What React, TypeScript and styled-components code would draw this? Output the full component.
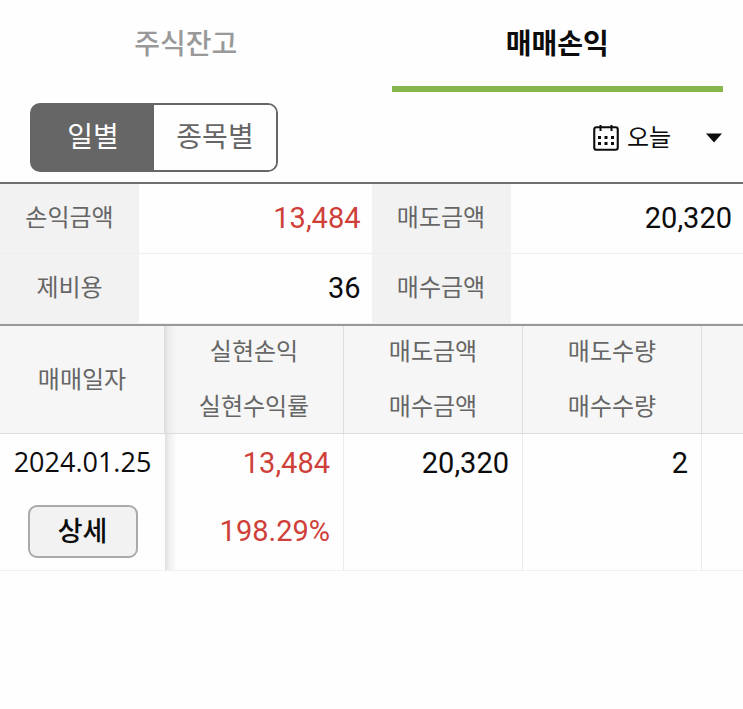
import React, { useState } from "react";
import styled, { createGlobalStyle } from "styled-components";

const GlobalStyle = createGlobalStyle`
  *, *::before, *::after { box-sizing: border-box; }
  body {
    margin: 0;
    background: #fefefe;
    color: #0c0c0c;
    font-family: "Noto Sans CJK KR", sans-serif;
    font-size: 24px;
  }
  button, select { font-family: inherit; margin: 0; }
`;

const Page = styled.main`
  overflow-x: hidden;
`;

const Tabs = styled.nav`
  display: grid;
  grid-template-columns: 1fr 1fr;
`;

const Tab = styled.button<{ $active: boolean }>`
  height: 92px;
  margin: 0 20px;
  padding: 0 0 2px;
  border: 0;
  border-bottom: 6px solid ${(p) => (p.$active ? "#86b64c" : "transparent")};
  background: none;
  color: ${(p) => (p.$active ? "#0c0c0c" : "#999")};
  font-size: 28px;
  font-weight: ${(p) => (p.$active ? 700 : 500)};
`;

const Toolbar = styled.div`
  display: flex;
  align-items: center;
  justify-content: space-between;
  padding: 11px 20px 10px 30px;
`;

const Segments = styled.div`
  display: flex;
  width: 248px;
  height: 69px;
  border: 2px solid #666;
  border-radius: 10px;
  background: linear-gradient(to right, #666 50%, #fefefe 50%) border-box;
  overflow: hidden;
`;

const Segment = styled.button<{ $active: boolean }>`
  flex: 1;
  padding: 0 0 6px;
  border: 0;
  background: ${(p) => (p.$active ? "#666" : "#fefefe")};
  color: ${(p) => (p.$active ? "#fefefe" : "#666")};
  font-size: 28px;
`;

const Period = styled.label`
  display: grid;
  grid-template-columns: 26px 96px;
  align-items: center;
  gap: 8px;
`;

const PeriodSelect = styled.select`
  grid-area: 1 / 2;
  appearance: none;
  padding: 0 0 4px;
  border: 0;
  background: none;
  color: #0c0c0c;
  font-size: 24px;
`;

const Arrow = styled.svg`
  grid-area: 1 / 2;
  justify-self: end;
  pointer-events: none;
`;

const Summary = styled.table`
  width: 100%;
  table-layout: fixed;
  border-collapse: separate;
  border-spacing: 0;
  border-top: 2px solid #707070;
  border-bottom: 2px solid #999;
`;

const SummaryLabel = styled.th`
  width: 139px;
  height: 70px;
  padding: 0 0 6px;
  background: #f2f2f2;
  border-bottom: 1px solid #efefef;
  color: #666;
  font-weight: 400;
`;

const SummaryValue = styled.td<{ $gain?: boolean }>`
  height: 70px;
  padding: 0 11px 2px 0;
  border-bottom: 1px solid #efefef;
  color: ${(p) => (p.$gain ? "#ce4039" : "#0c0c0c")};
  font-family: Roboto, sans-serif;
  font-size: 29px;
  text-align: right;
`;

const Trades = styled.table`
  width: 100%;
  min-width: 743px;
  table-layout: fixed;
  border-collapse: separate;
  border-spacing: 0;
`;

const Column = styled.col<{ $width?: number }>`
  width: ${(p) => (p.$width ? `${p.$width}px` : "auto")};
`;

const edgeShadow = "linear-gradient(to right, #e0e0e0, #eee 4px, transparent 12px)";

const Head = styled.th<{ $shadow?: boolean; $open?: boolean }>`
  height: 108px;
  padding: 0 0 4px;
  background: ${(p) => (p.$shadow ? `${edgeShadow}, #f6f6f6` : "#f6f6f6")};
  border-right: ${(p) => (p.$open ? "0" : "1px solid #dedede")};
  border-bottom: 1px solid #dcdcdc;
  color: #666;
  font-weight: 400;
`;

const HeadLine = styled.span`
  display: block;
  line-height: 48px;

  & + & { margin-top: 7px; }
`;

const Cell = styled.td<{ $shadow?: boolean; $gain?: boolean; $open?: boolean }>`
  height: 137px;
  padding: ${(p) => (p.$open ? "0" : "0 13px 0 0")};
  background: ${(p) => (p.$shadow ? edgeShadow : "none")};
  border-right: ${(p) => (p.$open ? "0" : "1px solid #ececec")};
  border-bottom: 1px solid #f0f0f0;
  color: ${(p) => (p.$gain ? "#ce4039" : "#0c0c0c")};
  font-family: Roboto, sans-serif;
  font-size: 29px;
  text-align: right;
  vertical-align: top;
`;

const CellLine = styled.span`
  display: block;
  height: 68px;
  line-height: 58px;
`;

const DateCell = styled(Cell)`
  text-align: center;
`;

const TradeDate = styled.time`
  display: block;
  height: 71px;
  font-family: "Open Sans", sans-serif;
  font-size: 27px;
  line-height: 56px;
`;

const DetailButton = styled.button`
  display: block;
  width: 110px;
  height: 53px;
  margin: 0 auto;
  padding: 0 0 3px;
  border: 2px solid #aaa;
  border-radius: 9px;
  background: #f2f2f2;
  color: #0c0c0c;
  font-family: "Noto Sans CJK KR", sans-serif;
  font-size: 27px;
  font-weight: 500;
  line-height: 44px;
`;

const CalendarIcon = () => (
  <svg width="26" height="28" viewBox="0 0 26 28" aria-hidden="true">
    <rect x="1.25" y="3.25" width="23.5" height="22.5" rx="2" fill="none" stroke="#0c0c0c" strokeWidth="2.1" />
    <path d="M7.5 1v6M18.5 1v6" stroke="#0c0c0c" strokeWidth="2" />
    <path
      d="M5 12h3v3H5zM11.500 12h3v3h-3zM18 12h3v3h-3zM5 18h3v3H5zM11.500 18h3v3h-3zM18 18h3v3h-3z"
      fill="#0c0c0c"
    />
  </svg>
);

const headings = [
  ["실현손익", "실현수익률"],
  ["매도금액", "매수금액"],
  ["매도수량", "매수수량"],
];

export default function App() {
  const [tab, setTab] = useState("매매손익");
  const [view, setView] = useState("일별");

  return (
    <Page>
      <GlobalStyle />
      <Tabs>
        {["주식잔고", "매매손익"].map((name) => (
          <Tab key={name} $active={tab === name} aria-pressed={tab === name} onClick={() => setTab(name)}>
            {name}
          </Tab>
        ))}
      </Tabs>
      <Toolbar>
        <Segments>
          {["일별", "종목별"].map((name) => (
            <Segment key={name} $active={view === name} aria-pressed={view === name} onClick={() => setView(name)}>
              {name}
            </Segment>
          ))}
        </Segments>
        <Period>
          <CalendarIcon />
          <PeriodSelect aria-label="오늘">
            <option>오늘</option>
          </PeriodSelect>
          <Arrow width="18" height="10" viewBox="0 0 18 10" aria-hidden="true">
            <path d="M1 .5h16L9 9.500z" fill="#0c0c0c" />
          </Arrow>
        </Period>
      </Toolbar>
      <Summary>
        <tbody>
          <tr>
            <SummaryLabel scope="row">손익금액</SummaryLabel>
            <SummaryValue $gain>13,484</SummaryValue>
            <SummaryLabel scope="row">매도금액</SummaryLabel>
            <SummaryValue>20,320</SummaryValue>
          </tr>
          <tr>
            <SummaryLabel scope="row">제비용</SummaryLabel>
            <SummaryValue>36</SummaryValue>
            <SummaryLabel scope="row">매수금액</SummaryLabel>
            <SummaryValue />
          </tr>
        </tbody>
      </Summary>
      <Trades>
        <colgroup>
          <Column $width={165} />
          <Column $width={179} />
          <Column $width={179} />
          <Column $width={179} />
          <Column />
        </colgroup>
        <thead>
          <tr>
            <Head scope="col">매매일자</Head>
            {headings.map(([top, bottom], index) => (
              <Head key={top} scope="col" $shadow={index === 0}>
                <HeadLine>{top}</HeadLine>
                <HeadLine>{bottom}</HeadLine>
              </Head>
            ))}
            <Head $open />
          </tr>
        </thead>
        <tbody>
          <tr>
            <DateCell $open>
              <TradeDate dateTime="2024-01-25">2024.01.25</TradeDate>
              <DetailButton>상세</DetailButton>
            </DateCell>
            <Cell $shadow $gain>
              <CellLine>13,484</CellLine>
              <CellLine>198.29%</CellLine>
            </Cell>
            <Cell>
              <CellLine>20,320</CellLine>
            </Cell>
            <Cell>
              <CellLine>2</CellLine>
            </Cell>
            <Cell $open />
          </tr>
        </tbody>
      </Trades>
    </Page>
  );
}
